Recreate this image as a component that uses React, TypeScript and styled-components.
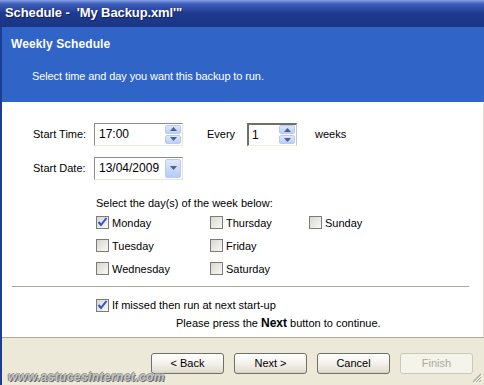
import React, { useState } from "react";
import styled, { createGlobalStyle } from "styled-components";

const GlobalStyle = createGlobalStyle`
  html, body {
    margin: 0;
    padding: 0;
    background: #ffffff;
  }
  body {
    font-family: "Liberation Sans", Arial, sans-serif;
    font-size: 11px;
    color: #000000;
  }
`;

const Window = styled.div`
  position: relative;
  width: 484px;
  height: 385px;
  display: flex;
  flex-direction: column;
  overflow: hidden;
  background: #ece9d8;
`;

const TitleBar = styled.div`
  height: 27px;
  flex: none;
  display: flex;
  align-items: center;
  padding-left: 5px;
  padding-bottom: 2px;
  box-sizing: border-box;
  background: linear-gradient(
    to bottom,
    #8aa3e6 0px,
    #5f7fd3 2px,
    #3d5db7 4px,
    #2e4ba6 9px,
    #1f3a8f 13px,
    #1b3586 27px
  );
  color: #ffffff;
  font-family: "Liberation Sans", Arial, sans-serif;
  font-weight: bold;
  font-size: 13px;
  letter-spacing: -0.1px;
  text-shadow: 1px 1px 0 #0d1f5c;
  white-space: pre;
`;

const Frame = styled.div`
  flex: 1;
  display: flex;
  flex-direction: column;
  border-left: 2px solid #1c3c98;
`;

const Header = styled.div`
  height: 75px;
  flex: none;
  background: #3064c7;
  color: #ffffff;
  box-sizing: border-box;
  padding: 10px 0 0 9px;
`;

const HeaderTitle = styled.div`
  font-weight: bold;
  font-size: 12px;
  line-height: 14px;
  letter-spacing: 0.1px;
`;

const HeaderText = styled.div`
  margin: 19px 0 0 21px;
  font-size: 11px;
  line-height: 13px;
  letter-spacing: -0.1px;
`;

const Body = styled.div`
  height: 235px;
  flex: none;
  background: #ffffff;
  border-right: 1px solid #e4e1d2;
  box-sizing: border-box;
  padding: 20px 0 0 31px;
  display: flex;
  flex-direction: column;
`;

const FieldRow = styled.div<{ $top?: number }>`
  display: flex;
  align-items: center;
  height: 24px;
  margin-top: ${({ $top }) => $top ?? 0}px;
`;

const Label = styled.span<{ $w: number; $gap?: number }>`
  width: ${({ $w }) => $w}px;
  margin-left: ${({ $gap }) => $gap ?? 0}px;
  flex: none;
  white-space: nowrap;
`;

const TextBox = styled.div<{ $w: number; $sunken?: boolean }>`
  position: relative;
  width: ${({ $w }) => $w}px;
  height: 23px;
  box-sizing: border-box;
  flex: none;
  display: flex;
  align-items: center;
  justify-content: space-between;
  padding-left: 4px;
  padding-right: 1px;
  background: #ffffff;
  border: 1px solid #a7a6aa;
  border-top-color: #8c8b88;
  border-left-color: #8c8b88;
  border-bottom-color: #e9e7dc;
  border-right-color: #e9e7dc;
  ${({ $sunken }) =>
    $sunken &&
    `
    border-width: 2px 1px 1px 2px;
    border-top-color: #716f64;
    border-left-color: #716f64;
    border-bottom-color: #f1efe2;
    border-right-color: #c8c6b8;
    padding-left: 3px;
  `}
  font-size: 12px;
`;

const SpinCol = styled.div`
  display: flex;
  flex-direction: column;
  gap: 1px;
  width: 16px;
`;

const SpinButton = styled.div`
  height: 9px;
  box-sizing: border-box;
  border: 1px solid #b8cbf3;
  border-radius: 2px;
  background: linear-gradient(to bottom, #dde7fc, #bccff8);
  display: flex;
  align-items: center;
  justify-content: center;
`;

const DropButton = styled.div`
  width: 16px;
  height: 19px;
  box-sizing: border-box;
  border: 1px solid #b8cbf3;
  border-radius: 2px;
  background: linear-gradient(to bottom, #dfe8fc, #b6cbf7);
  display: flex;
  align-items: center;
  justify-content: center;
`;

const Caption = styled.div`
  margin: 17px 0 0 63px;
  line-height: 13px;
`;

const DayGrid = styled.div`
  margin: 1px 0 0 63px;
  display: grid;
  grid-template-columns: 114px 99px 100px;
  grid-auto-rows: 23px;
`;

const CheckLabel = styled.label`
  display: flex;
  align-items: center;
  gap: 3px;
  height: 16px;
  align-self: center;
  white-space: nowrap;
  cursor: default;
`;

const Box = styled.span`
  width: 13px;
  height: 13px;
  box-sizing: border-box;
  flex: none;
  border: 1px solid #7b7b7b;
  background: linear-gradient(135deg, #d7d6cf 0%, #ecebe5 60%, #f8f8f6 100%);
  display: flex;
  align-items: center;
  justify-content: center;
`;

const Separator = styled.div`
  height: 1px;
  background: #aca899;
  border-bottom: 1px solid #ffffff;
  margin: 6px 14px 0 -21px;
`;

const MissedRow = styled.div`
  margin: 9px 0 0 63px;
  height: 16px;
  display: flex;
  align-items: center;
`;

const Hint = styled.div`
  margin: 4px 0 0 143px;
  line-height: 13px;
  white-space: nowrap;
  b {
    font-weight: bold;
    font-size: 12px;
  }
`;

const BottomLine = styled.div`
  height: 1px;
  flex: none;
  background: #aca899;
`;

const Footer = styled.div`
  flex: 1;
  display: flex;
  justify-content: flex-end;
  align-items: flex-start;
  gap: 10px;
  padding: 15px 11px 0 0;
`;

const Button = styled.button<{ $disabled?: boolean }>`
  width: 73px;
  height: 21px;
  box-sizing: border-box;
  margin: 0;
  padding: 0;
  border: 1px solid ${({ $disabled }) => ($disabled ? "#cac8bb" : "#6f6f6b")};
  border-radius: 3px;
  background: ${({ $disabled }) =>
    $disabled
      ? "#f5f4ea"
      : "linear-gradient(to bottom, #ffffff 0%, #f4f3ee 45%, #e3e0d3 90%, #d6d0c0 100%)"};
  color: ${({ $disabled }) => ($disabled ? "#aca899" : "#000000")};
  font-family: "Liberation Sans", Arial, sans-serif;
  font-size: 11px;
  line-height: 19px;
`;

const Watermark = styled.div`
  position: absolute;
  left: 8px;
  bottom: 1px;
  font-family: "Liberation Sans", Arial, sans-serif;
  font-style: italic;
  font-weight: bold;
  font-size: 12px;
  letter-spacing: 0.4px;
  color: #c4c4c4;
  text-shadow: 1px 1px 0 #6a6a6a, -1px 0 0 #8a8a8a, 0 -1px 0 #9a9a9a;
`;

const Grip = styled.svg`
  position: absolute;
  right: 2px;
  bottom: 2px;
`;

const Arrow = ({ up }: { up?: boolean }) => (
  <svg width="7" height="4" viewBox="0 0 7 4">
    <path d={up ? "M0 4 L3.5 0 L7 4 Z" : "M0 0 L7 0 L3.5 4 Z"} fill="#4d6185" />
  </svg>
);

const Check = () => (
  <svg width="11" height="11" viewBox="0 0 11 11">
    <path d="M1.5 5 L4 8 L9.5 1" stroke="#2a55c9" strokeWidth="2" fill="none" />
  </svg>
);

const CheckBox = ({ label, initial }: { label: string; initial?: boolean }) => {
  const [on, setOn] = useState(!!initial);
  return (
    <CheckLabel onClick={() => setOn(!on)}>
      <Box>{on && <Check />}</Box>
      {label}
    </CheckLabel>
  );
};

const days = [
  ["Monday", "Thursday", "Sunday"],
  ["Tuesday", "Friday", ""],
  ["Wednesday", "Saturday", ""],
];

export default function App() {
  return (
    <>
      <GlobalStyle />
      <Window>
        <TitleBar>{"Schedule -  'My Backup.xml'\""}</TitleBar>
        <Frame>
          <Header>
            <HeaderTitle>Weekly Schedule</HeaderTitle>
            <HeaderText>Select time and day you want this backup to run.</HeaderText>
          </Header>
          <Body>
            <FieldRow>
              <Label $w={61}>Start Time:</Label>
              <TextBox $w={89}>
                17:00
                <SpinCol>
                  <SpinButton><Arrow up /></SpinButton>
                  <SpinButton><Arrow /></SpinButton>
                </SpinCol>
              </TextBox>
              <Label $w={40} $gap={24}>Every</Label>
              <TextBox $w={50} $sunken>
                1
                <SpinCol>
                  <SpinButton><Arrow up /></SpinButton>
                  <SpinButton><Arrow /></SpinButton>
                </SpinCol>
              </TextBox>
              <Label $w={40} $gap={18}>weeks</Label>
            </FieldRow>
            <FieldRow $top={10}>
              <Label $w={61}>Start Date:</Label>
              <TextBox $w={89}>
                13/04/2009
                <DropButton><Arrow /></DropButton>
              </TextBox>
            </FieldRow>
            <Caption>Select the day(s) of the week below:</Caption>
            <DayGrid>
              {days.flat().map((d, i) =>
                d ? <CheckBox key={i} label={d} initial={d === "Monday"} /> : <span key={i} />
              )}
            </DayGrid>
            <Separator />
            <MissedRow>
              <CheckBox label="If missed then run at next start-up" initial />
            </MissedRow>
            <Hint>
              Please press the <b>Next</b> button to continue.
            </Hint>
          </Body>
          <BottomLine />
          <Footer>
            <Button>&lt; Back</Button>
            <Button>Next &gt;</Button>
            <Button>Cancel</Button>
            <Button $disabled>Finish</Button>
          </Footer>
        </Frame>
        <Watermark>www.astucesinternet.com</Watermark>
        <Grip width="10" height="10" viewBox="0 0 10 10">
          <path d="M9 1 L1 9 M9 4 L4 9 M9 7 L7 9" stroke="#aca899" strokeWidth="1.2" />
          <path d="M10 2 L2 10 M10 5 L5 10 M10 8 L8 10" stroke="#ffffff" strokeWidth="1" />
        </Grip>
      </Window>
    </>
  );
}
